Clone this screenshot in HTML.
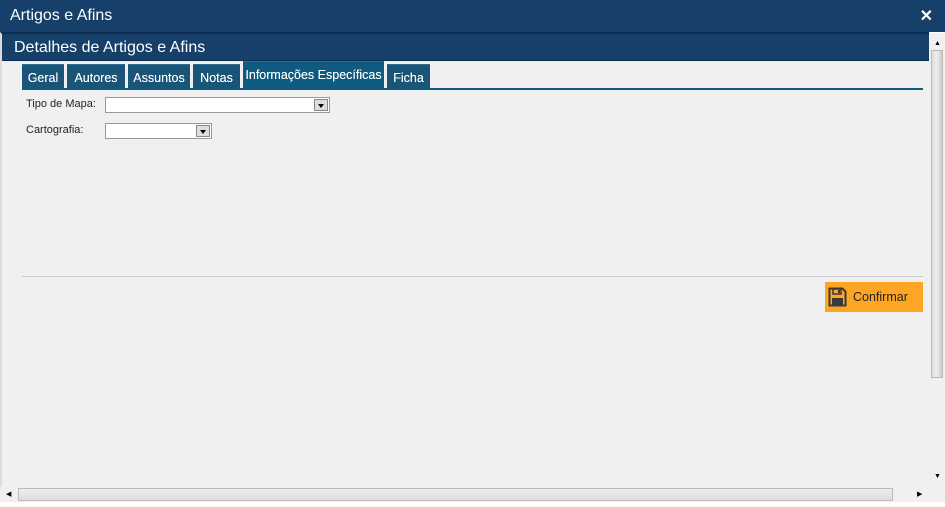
<!DOCTYPE html>
<html><head><meta charset="utf-8"><style>
*{margin:0;padding:0;box-sizing:border-box}
body{width:945px;height:507px;background:#fff;position:relative;overflow:hidden;font-family:"Liberation Sans",sans-serif}
.a{position:absolute}
.top{left:0;top:0;width:945px;height:32px;background:#163f6a;color:#fff;font-size:16px;line-height:32px;padding-left:10px}
.body{left:0;top:32px;width:929px;height:455px;background:#f0f0f0;border-top:2px solid #0d2c4e;border-left:2px solid #dcdcdc}
.hdr{left:2px;top:34px;width:927px;height:27px;background:#163f6a;color:#fff;font-size:16px;line-height:27px;padding-left:12px;border-bottom:1px solid #0d2c4e}
.tab{top:64px;height:25px;background:#1a5577;color:#fff;font-size:12.5px;line-height:26px;text-align:center;border-top:1px solid #2d6b8f;text-shadow:0 0 0.3px #fff}
.sel{border:1px solid #999;background:#fff;height:16px}
.arr{position:absolute;right:1px;top:1px;width:14px;height:12px;background:#ddd;border:1px solid #888}
.arr:after{content:"";position:absolute;left:3px;top:4px;border:3px solid transparent;border-top:4px solid #000;border-bottom:0}
.lbl{font-size:11px;color:#222}
</style></head><body>
<div class="a top">Artigos e Afins</div>
<div class="a" style="right:12px;top:6px;color:#fff;font-size:16px;font-weight:bold">✕</div>
<div class="a body"></div>
<div class="a hdr">Detalhes de Artigos e Afins</div>
<div class="a tab" style="left:22px;width:42px">Geral</div>
<div class="a tab" style="left:67px;width:58px">Autores</div>
<div class="a tab" style="left:128px;width:62px">Assuntos</div>
<div class="a tab" style="left:193px;width:47px">Notas</div>
<div class="a tab" style="left:243px;top:61px;height:28px;width:141px;background:#0e5a80;line-height:26px">Informações Específicas</div>
<div class="a tab" style="left:387px;width:43px">Ficha</div>
<div class="a" style="left:22px;top:88px;width:901px;height:2px;background:#0e5a80"></div>
<div class="a lbl" style="left:26px;top:98px">Tipo de Mapa:</div>
<div class="a sel" style="left:105px;top:97px;width:225px"><div class="arr"></div></div>
<div class="a lbl" style="left:26px;top:124px">Cartografia:</div>
<div class="a sel" style="left:105px;top:123px;width:107px"><div class="arr"></div></div>
<div class="a" style="left:22px;top:276px;width:901px;height:1px;background:#ccc"></div>
<div class="a" style="left:825px;top:282px;width:98px;height:30px;background:#fda624;font-size:12.5px;color:#222;line-height:30px;padding-left:28px">Confirmar</div>
<svg class="a" style="left:828px;top:287px" width="19" height="20" viewBox="0 0 19 20"><path d="M1.5 1.5h13l3 3v14h-16z" fill="none" stroke="#3a3a3a" stroke-width="2"/><rect x="5" y="2" width="8" height="5" fill="none" stroke="#3a3a3a" stroke-width="1.5"/><rect x="10" y="3" width="2" height="3" fill="#3a3a3a"/><rect x="4" y="11" width="11" height="7" fill="#3a3a3a"/></svg>
<div class="a" style="left:929px;top:33px;width:16px;height:454px;background:#f0f0f0"></div>
<div class="a" style="left:931px;top:50px;width:12px;height:328px;background:linear-gradient(90deg,#ddd,#eee,#ccc);border:1px solid #bbb"></div>
<div class="a" style="left:934px;top:40px;font-size:7px">▲</div>
<div class="a" style="left:934px;top:473px;font-size:7px">▼</div>
<div class="a" style="left:0;top:487px;width:929px;height:15px;background:#f0f0f0"></div>
<div class="a" style="left:18px;top:488px;width:875px;height:13px;background:linear-gradient(#eee,#ddd);border:1px solid #bbb"></div>
<div class="a" style="left:6px;top:490px;font-size:7px">◀</div>
<div class="a" style="left:917px;top:490px;font-size:7px">▶</div>
<div class="a" style="left:929px;top:487px;width:16px;height:15px;background:#f0f0f0"></div>
</body></html>
